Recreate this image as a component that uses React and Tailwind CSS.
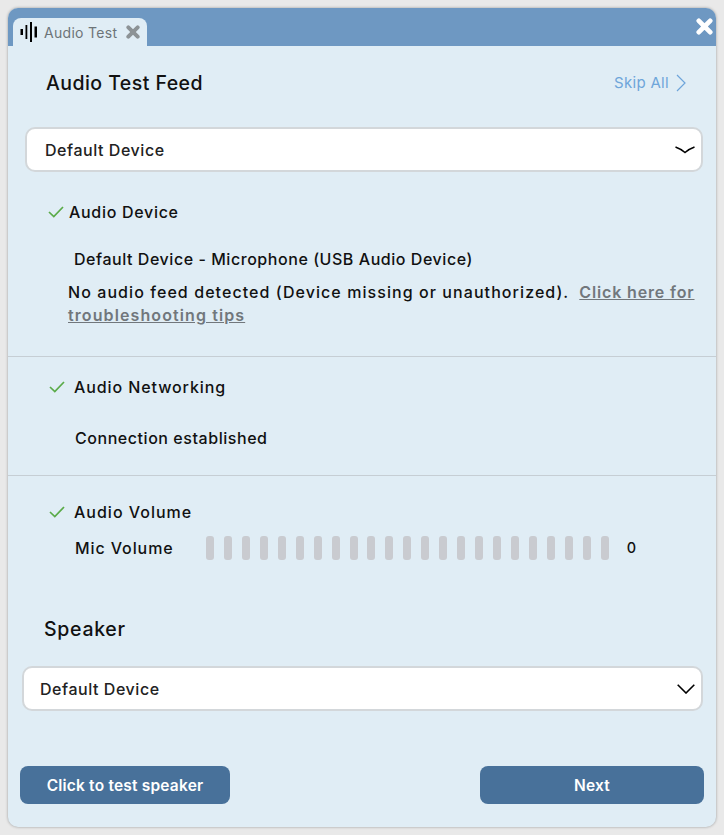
import React from 'react'

const bars = Array.from({ length: 23 })

const WaveIcon = () => (
    <svg width="18" height="20" viewBox="0 0 18 20" className="text-black">
        <rect x="0.5" y="7" width="2.5" height="6" fill="currentColor" />
        <rect x="5.5" y="3" width="1.8" height="14" fill="currentColor" />
        <rect x="10" y="0" width="2" height="20" fill="currentColor" />
        <rect x="14.5" y="4.5" width="2.5" height="11" fill="currentColor" />
    </svg>
)

const CrossIcon = ({ className }) => (
    <svg viewBox="0 0 12 12" className={className}>
        <path d="M2 2 L10 10 M10 2 L2 10" stroke="currentColor" strokeWidth="3.4" strokeLinecap="round" />
    </svg>
)

const Check = () => (
    <svg width="16" height="12" viewBox="0 0 16 12" fill="none">
        <path d="M1 6 L5.8 10.6 L15 1" stroke="#5aab48" strokeWidth="1.7" />
    </svg>
)

const Select = ({ className, caret }) => (
    <div className={`h-[45px] flex items-center justify-between bg-white border-2 border-[#d3d7da] rounded-[10px] text-[16px] tracking-[0.55px] font-[450] text-[#222] ${className}`}>
        <span>Default Device</span>
        {caret}
    </div>
)

export default function App() {
    return (
        <div className="w-[724px] h-[835px] bg-[#e9e9e9] p-2 font-['Inter','Noto_Sans',sans-serif] text-[#111]">
            <div className="w-[708px] h-[819px] bg-[#e0edf5] rounded-[10px] shadow-[0_0_3px_rgba(0,0,0,0.35)] overflow-hidden flex flex-col">
                <div className="h-[38px] shrink-0 bg-[#6e98c2] flex items-end justify-between pl-[5px] pr-[3px]">
                    <div className="w-[134px] h-[28px] bg-[#e0edf5] rounded-t-[8px] flex items-center pl-[7px] text-[#6d7478] text-[14px] tracking-[0.3px]">
                        <WaveIcon />
                        <span className="ml-[6px]">Audio Test</span>
                        <CrossIcon className="w-[14px] h-[14px] ml-[9px] text-[#8d9396]" />
                    </div>
                    <CrossIcon className="w-[17px] h-[17px] mb-[11px] text-white" />
                </div>

                <div className="h-[81px] shrink-0 flex items-start justify-between pl-[38px] pr-[30px] pt-[25px]">
                    <h1 className="text-[19.5px] leading-[24px] font-medium tracking-[0.45px]">Audio Test Feed</h1>
                    <div className="flex items-center h-6 text-[#6ea5da] text-[15px] tracking-[0.3px]">
                        <span>Skip All</span>
                        <svg width="10" height="18" viewBox="0 0 10 18" fill="none" className="ml-[7px]">
                            <path d="M1 1 L9 9 L1 17" stroke="currentColor" strokeWidth="1.2" />
                        </svg>
                    </div>
                </div>

                <Select
                    className="ml-[17px] mr-[13px] pl-[18px] pr-[6px] shrink-0"
                    caret={
                        <svg width="20" height="8" viewBox="0 0 20 8" fill="none">
                            <path d="M0.5 1 Q6 3 10 6.5 Q14 3 19.5 1" stroke="#000" strokeWidth="1.6" />
                        </svg>
                    }
                />

                <div className="h-[185px] shrink-0 border-b border-[#c6ced4] text-[16px] tracking-[0.55px] font-[450] leading-[22px]">
                    <div className="flex items-center mt-[29px] ml-[40px] gap-[5px]">
                        <Check />
                        <span className="tracking-[0.7px]">Audio Device</span>
                    </div>
                    <p className="mt-[25px] ml-[66px]">Default Device - Microphone (USB Audio Device)</p>
                    <div className="mt-[11px] ml-[60px] flex">
                        <p className="tracking-[1.07px]">No audio feed detected (Device missing or unauthorized).</p>
                        <a className="ml-[10px] underline font-semibold text-[#71777c] tracking-[0.85px]">Click here for</a>
                    </div>
                    <a className="block mt-[1px] ml-[60px] underline font-semibold text-[#71777c] tracking-[1.1px]">troubleshooting tips</a>
                </div>

                <div className="h-[119px] shrink-0 border-b border-[#c6ced4] text-[16px] tracking-[0.55px] font-[450] leading-[22px]">
                    <div className="flex items-center mt-[19px] ml-[41px] gap-[9px]">
                        <Check />
                        <span className="tracking-[0.9px]">Audio Networking</span>
                    </div>
                    <p className="mt-[29px] ml-[67px]">Connection established</p>
                </div>

                <div className="shrink-0 text-[16px] tracking-[0.9px] font-[450] leading-[22px]">
                    <div className="flex items-center mt-[25px] ml-[41px] gap-[9px]">
                        <Check />
                        <span className="tracking-[1px]">Audio Volume</span>
                    </div>
                    <div className="flex items-center mt-[13px] ml-[67px]">
                        <span className="w-[131px]">Mic Volume</span>
                        <div className="flex gap-[9.95px]">
                            {bars.map((_, i) => (
                                <div key={i} className="w-2 h-6 rounded-[3px] bg-[#c9cbd0]" />
                            ))}
                        </div>
                        <span className="ml-[18px] text-[14.5px]">0</span>
                    </div>
                </div>

                <h2 className="mt-[57px] ml-[36px] text-[19.5px] leading-[24px] font-medium tracking-[0.7px]">Speaker</h2>

                <Select
                    className="mt-[25px] ml-[14px] mr-[13px] pl-[16px] pr-[6px] shrink-0"
                    caret={
                        <svg width="18" height="10" viewBox="0 0 18 10" fill="none">
                            <path d="M0.7 0.7 L9 9 L17.3 0.7" stroke="#000" strokeWidth="1.6" />
                        </svg>
                    }
                />

                <div className="mt-[55px] mx-[12px] flex justify-between text-white text-[15.5px] tracking-[0.2px] font-semibold">
                    <button className="w-[210px] h-[38px] pt-[1px] bg-[#48719a] rounded-[8px]">Click to test speaker</button>
                    <button className="w-[224px] h-[38px] pt-[1px] bg-[#48719a] rounded-[8px]">Next</button>
                </div>
            </div>
        </div>
    )
}
